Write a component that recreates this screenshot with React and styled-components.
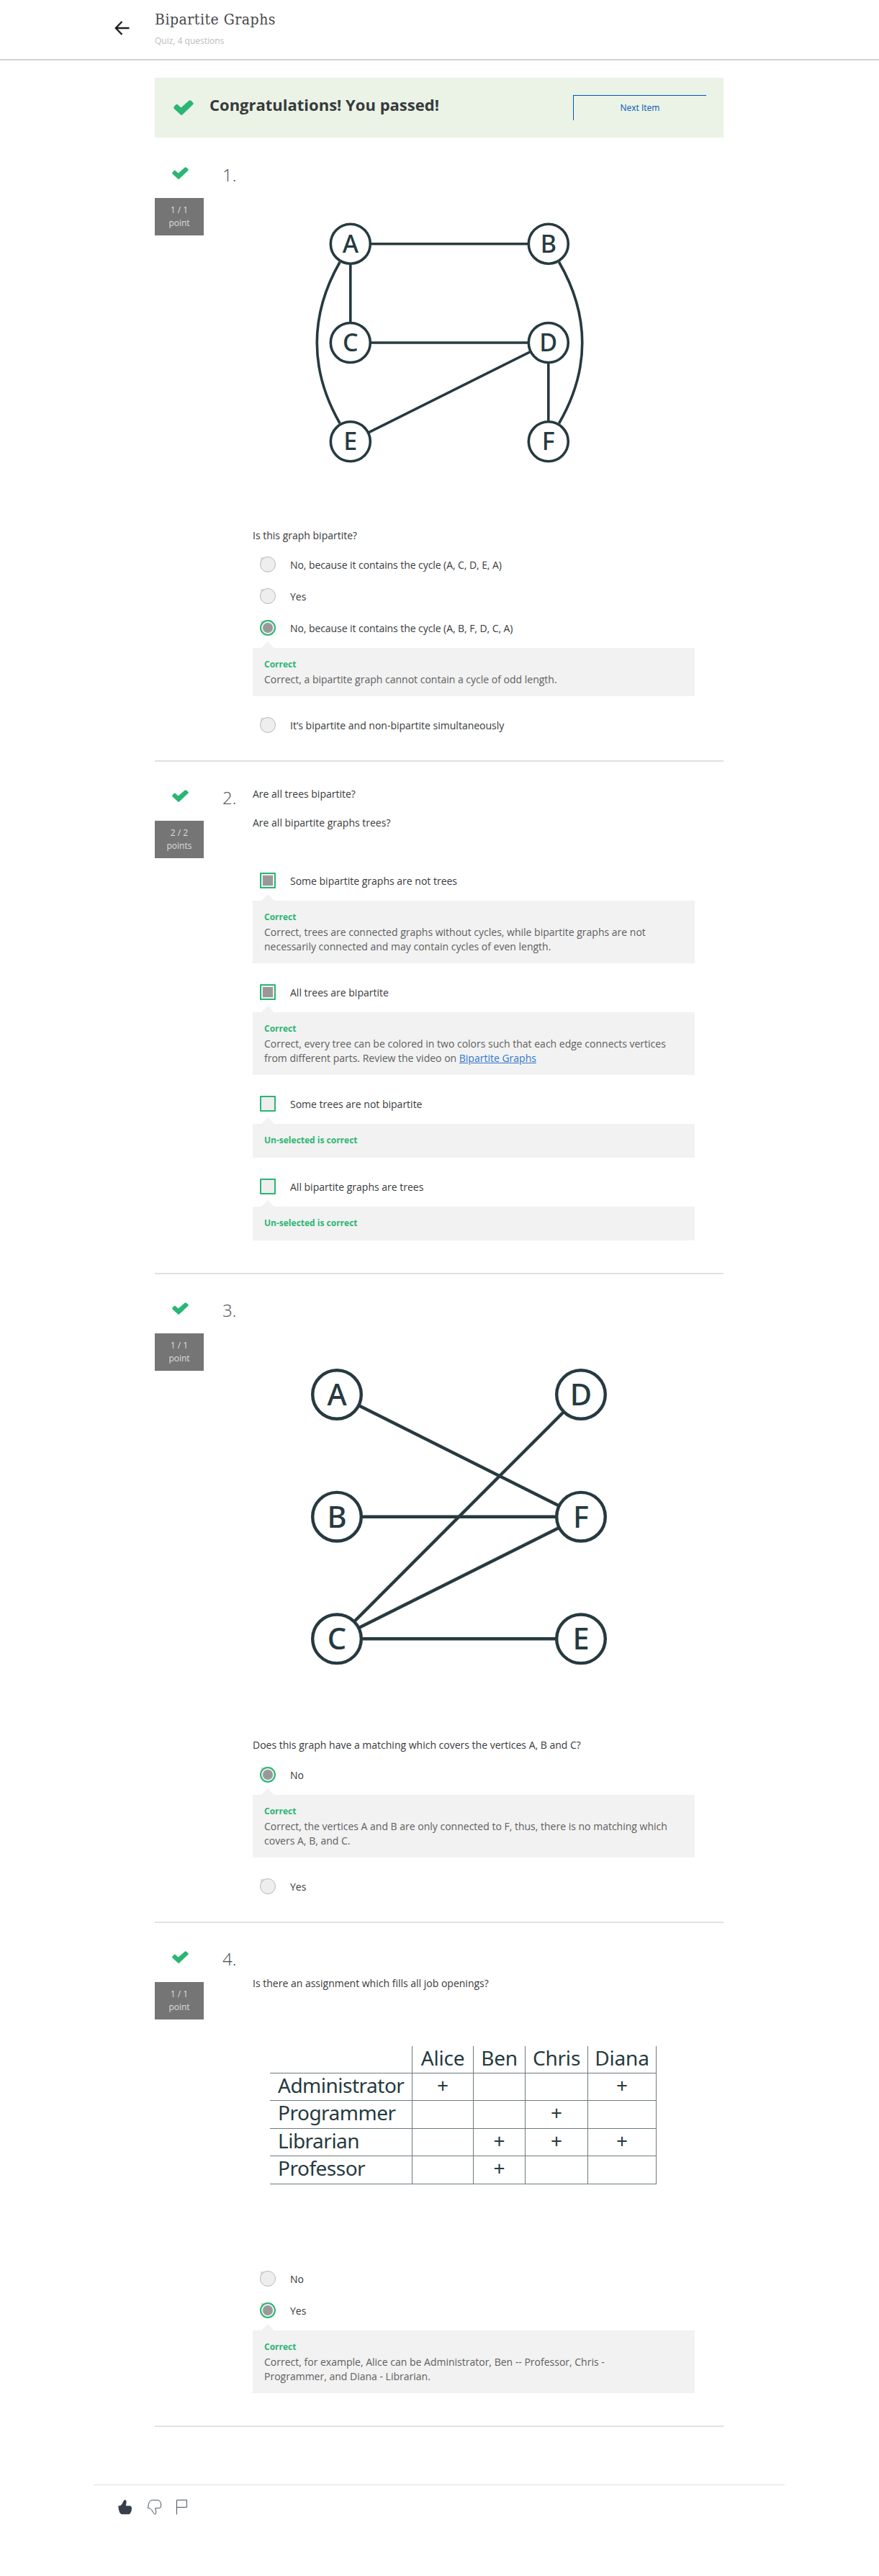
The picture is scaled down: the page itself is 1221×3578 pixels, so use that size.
import React from "react";
import styled, { createGlobalStyle } from "styled-components";

const GREEN = "#2ab673";
const INK = "#263a40";

const GlobalStyle = createGlobalStyle`
  body {
    margin: 0;
    background: #fff;
    color: #373a3c;
    font-family: "Open Sans", "Noto Sans", sans-serif;
    font-size: 14px;
    line-height: 20px;
  }
`;

const Page = styled.div`
  width: 1221px;
  min-height: 3578px;
  background: #fff;
`;

const Header = styled.header`
  display: flex;
  box-sizing: border-box;
  height: 84px;
  padding-left: 159px;
  border-bottom: 2px solid #d3d3d3;
`;

const BackIcon = styled.svg`
  width: 21px;
  height: 20px;
  margin: 29px 35px 0 0;
`;

const HeaderText = styled.div`
  padding-top: 13px;
`;

const Title = styled.h1`
  margin: 0;
  font-family: "DejaVu Serif Condensed", "DejaVu Serif", serif;
  font-stretch: condensed;
  font-weight: 400;
  font-size: 21px;
  line-height: 28px;
  letter-spacing: 0.5px;
  color: #484848;
  white-space: nowrap;
`;

const Subtitle = styled.div`
  margin-top: 7px;
  font-size: 12px;
  line-height: 18px;
  color: #bdbdbd;
`;

const Main = styled.main`
  width: 790px;
  margin-left: 215px;
`;

const Banner = styled.section`
  display: flex;
  box-sizing: border-box;
  height: 83px;
  margin: 24px 0 2px;
  padding-left: 26px;
  background: #eaf3e6;
`;

const BannerTitle = styled.h2`
  flex: 1;
  margin: 22px 0 0 22px;
  font-size: 22px;
  line-height: 30px;
  font-weight: 700;
  color: #373a3c;
`;

const NextButton = styled.button`
  box-sizing: border-box;
  width: 185px;
  height: 35px;
  margin: 24px 24px 0 0;
  padding: 0;
  border: 0 solid #0156b8;
  border-top-width: 1px;
  border-left-width: 1px;
  background: transparent;
  color: #0156b8;
  font: 12px/34px "Open Sans", sans-serif;
`;

const CheckSvg = styled.svg`
  display: block;
  width: ${(p) => p.$w}px;
  height: ${(p) => p.$h}px;
  margin-top: ${(p) => p.$top}px;
  margin-left: ${(p) => p.$left || 0}px;
  flex: none;
`;

const Question = styled.section`
  display: grid;
  grid-template-columns: 68px 68px 614px;
  padding-bottom: 27px;
  border-bottom: 2px solid #e1e1e1;
`;

const Side = styled.div`
  display: flex;
  flex-direction: column;
  align-items: center;
`;

const Points = styled.div`
  box-sizing: border-box;
  width: 68px;
  height: 52px;
  margin-top: 26px;
  padding-top: 8px;
  background: #757575;
  color: #dedede;
  font-size: 12px;
  line-height: 18px;
  text-align: center;
`;

const Number = styled.div`
  padding: 32.5px 0 0 26px;
  font-size: 24px;
  line-height: 34px;
  font-weight: 300;
  color: #4a4a4a;
`;

const Content = styled.div`
  padding-top: 35px;
`;

const Prompt = styled.p`
  margin: ${(p) => p.$top || 0}px 0 ${(p) => p.$bottom || 0}px;
  color: #373a3c;
`;

const Drawing = styled.svg`
  display: block;
  width: 614px;
  height: ${(p) => p.$h}px;
  font-family: "Noto Sans", "Open Sans", sans-serif;
`;

const Option = styled.label`
  display: flex;
  align-items: center;
  height: 44px;
  padding-left: 10px;
`;

const Control = styled.span`
  box-sizing: border-box;
  display: flex;
  align-items: center;
  justify-content: center;
  width: 22px;
  height: 22px;
  background: #eee;
  border: ${(p) => (p.$green ? `2px solid ${GREEN}` : "1px solid #b9b9b9")};
  border-radius: ${(p) => (p.$round ? "50%" : "1px")};
`;

const ControlSlot = styled.span`
  width: 22px;
  height: 22px;
  margin-right: 20px;
  background: ${(p) =>
    p.$round ? "linear-gradient(#dedede, #dedede) 1px 1px / 8px 8px no-repeat" : "none"};
`;

const Mark = styled.span`
  width: 14px;
  height: 14px;
  background: #999;
  border-radius: ${(p) => (p.$round ? "50%" : "0")};
`;

const OptionText = styled.span`
  padding-top: 2px;
  letter-spacing: ${(p) => (p.$tight ? "-0.07px" : "normal")};
`;

const Feedback = styled.div`
  position: relative;
  margin: 6px 0 18px;
  padding: 14px 16px 13px;
  background: #f2f2f2;
  color: #5e5e5e;

  &::before {
    content: "";
    position: absolute;
    left: 12px;
    top: -9px;
    border: solid transparent;
    border-width: 0 9.5px 9px;
    border-bottom-color: #f2f2f2;
  }
`;

const FeedbackTitle = styled.div`
  height: 20px;
  font-size: 12px;
  line-height: 18px;
  font-weight: 700;
  color: ${GREEN};
`;

const Link = styled.a`
  color: #2f76cf;
  text-decoration: underline;
`;

const Table = styled.div`
  display: grid;
  grid-template-columns: 198px 85px 72px 87px 95px;
  grid-template-rows: 38px 38px 39px 38px 39px;
  width: 537px;
  margin: 77px 0 109px 24px;
  font-family: "Noto Sans", "Open Sans", sans-serif;
  font-size: 28px;
  line-height: 32px;
  color: ${INK};
`;

const Cell = styled.div`
  box-sizing: border-box;
  border-right: 1px solid #6c7a7e;
  border-bottom: 1px solid #6c7a7e;
  text-align: ${(p) => (p.$left ? "left" : "center")};
  padding-left: ${(p) => (p.$left ? 11 : 0)}px;
  letter-spacing: ${(p) => (p.$left ? "-0.5px" : "-0.2px")};
  white-space: nowrap;
`;

const Footer = styled.footer`
  display: flex;
  align-items: flex-start;
  box-sizing: border-box;
  width: 960px;
  margin: 80px 0 0 130px;
  padding: 20px 0 0 34px;
  border-top: 1px solid #e1e1e1;
`;

const FootIcon = styled.svg`
  width: 20px;
  height: 21px;
  margin-right: ${(p) => p.$gap || 0}px;
`;

function Check({ w, h, top, left }) {
  return (
    <CheckSvg $w={w} $h={h} $top={top} $left={left} viewBox="0 0 28 21" preserveAspectRatio="none">
      <path
        fill={GREEN}
        d="M.9 9.1 3.4 6.3Q4.6 5.3 5.8 6.3L10.5 10.6 21.2 1Q22.8-.4 24.3.8L27.1 3.4Q28.3 4.9 27 6.2L12.5 20.2Q11.1 21.5 9.7 20.2L.9 12Q-.4 10.5.9 9.1Z"
      />
    </CheckSvg>
  );
}

function Graph({ height, viewBox, nodes, edges, curves = [], r, stroke, size }) {
  return (
    <Drawing $h={height} viewBox={viewBox}>
      <g stroke={INK} strokeWidth={stroke} fill="none">
        {edges.map(([a, b]) => (
          <line key={a + b} x1={nodes[a][0]} y1={nodes[a][1]} x2={nodes[b][0]} y2={nodes[b][1]} />
        ))}
        {curves.map((d) => (
          <path key={d} d={d} />
        ))}
      </g>
      {Object.entries(nodes).map(([name, [x, y]]) => (
        <g key={name}>
          <circle cx={x} cy={y} r={r} fill="#fff" stroke={INK} strokeWidth={stroke} />
          <text x={x} y={y + size * 0.357} fontSize={size} fontWeight="500" textAnchor="middle" fill={INK}>
            {name}
          </text>
        </g>
      ))}
    </Drawing>
  );
}

function Choice({ round, selected, green, tight, label, note, children }) {
  return (
    <>
      <Option>
        <ControlSlot $round={round}>
          <Control $round={round} $green={green || selected}>
            {selected && <Mark $round={round} />}
          </Control>
        </ControlSlot>
        <OptionText $tight={tight}>{label}</OptionText>
      </Option>
      {note && (
        <Feedback>
          <FeedbackTitle>{note}</FeedbackTitle>
          {children}
        </Feedback>
      )}
    </>
  );
}

function QuestionBlock({ number, score, unit, children }) {
  return (
    <Question>
      <Side>
        <Check w={23} h={17} top={39} left={2} />
        <Points>
          {score}
          <br />
          {unit}
        </Points>
      </Side>
      <Number>{number}.</Number>
      <Content>{children}</Content>
    </Question>
  );
}

const people = ["Alice", "Ben", "Chris", "Diana"];
const jobs = [
  ["Administrator", "+", "", "", "+"],
  ["Programmer", "", "", "+", ""],
  ["Librarian", "", "+", "+", "+"],
  ["Professor", "", "+", "", ""],
];

export default function App() {
  return (
    <Page>
      <GlobalStyle />
      <Header>
        <BackIcon viewBox="0 0 21 20" fill="none" stroke="#1f1f1f" strokeWidth="2.4">
          <path d="M10.5 1 1.8 10l8.7 9M2 10h18.5" />
        </BackIcon>
        <HeaderText>
          <Title>Bipartite Graphs</Title>
          <Subtitle>Quiz, 4 questions</Subtitle>
        </HeaderText>
      </Header>

      <Main>
        <Banner>
          <Check w={28} h={21} top={31} />
          <BannerTitle>Congratulations! You passed!</BannerTitle>
          <NextButton>Next Item</NextButton>
        </Banner>

        <QuestionBlock number={1} score="1 / 1" unit="point">
          <Graph
            height={506}
            viewBox="351 228 614 506"
            r={27.5}
            stroke={3.6}
            size={34}
            nodes={{
              A: [486.8, 338.7],
              B: [761.8, 338.7],
              C: [486.8, 476],
              D: [761.8, 476],
              E: [486.8, 613.3],
              F: [761.8, 613.3],
            }}
            edges={["AB", "AC", "CD", "DE", "DF"]}
            curves={[
              "M472.1 364C429.7 438 429.7 514 472.1 588",
              "M776.5 364C819.5 438 819.5 514 776.5 588",
            ]}
          />
          <Prompt $bottom={8}>Is this graph bipartite?</Prompt>
          <Choice round tight label="No, because it contains the cycle (A, C, D, E, A)" />
          <Choice round label="Yes" />
          <Choice round selected tight label="No, because it contains the cycle (A, B, F, D, C, A)" note="Correct">
            Correct, a bipartite graph cannot contain a cycle of odd length.
          </Choice>
          <Choice round label="It’s bipartite and non-bipartite simultaneously" />
        </QuestionBlock>

        <QuestionBlock number={2} score="2 / 2" unit="points">
          <Prompt $bottom={20}>Are all trees bipartite?</Prompt>
          <Prompt $bottom={48}>Are all bipartite graphs trees?</Prompt>
          <Choice selected label="Some bipartite graphs are not trees" note="Correct">
            Correct, trees are connected graphs without cycles, while bipartite graphs are not
            <br />
            necessarily connected and may contain cycles of even length.
          </Choice>
          <Choice selected label="All trees are bipartite" note="Correct">
            Correct, every tree can be colored in two colors such that each edge connects vertices
            <br />
            from different parts. Review the video on <Link>Bipartite Graphs</Link>
          </Choice>
          <Choice green label="Some trees are not bipartite" note="Un-selected is correct" />
          <Choice green label="All bipartite graphs are trees" note="Un-selected is correct" />
        </QuestionBlock>

        <QuestionBlock number={3} score="1 / 1" unit="point">
          <Graph
            height={609}
            viewBox="351 1805 614 609"
            r={33.8}
            stroke={4.4}
            size={41.5}
            nodes={{
              A: [468, 1937],
              B: [468, 2106.7],
              C: [468, 2276.3],
              D: [807, 1937],
              F: [807, 2106.7],
              E: [807, 2276.3],
            }}
            edges={["AF", "BF", "CD", "CF", "CE"]}
          />
          <Prompt $bottom={9}>Does this graph have a matching which covers the vertices A, B and C?</Prompt>
          <Choice round selected label="No" note="Correct">
            Correct, the vertices A and B are only connected to F, thus, there is no matching which
            <br />
            covers A, B, and C.
          </Choice>
          <Choice round label="Yes" />
        </QuestionBlock>

        <QuestionBlock number={4} score="1 / 1" unit="point">
          <Prompt $top={39}>Is there an assignment which fills all job openings?</Prompt>
          <Table>
            <Cell />
            {people.map((name) => (
              <Cell key={name}>{name}</Cell>
            ))}
            {jobs.map(([job, ...marks]) => (
              <React.Fragment key={job}>
                <Cell $left>{job}</Cell>
                {marks.map((mark, i) => (
                  <Cell key={i}>{mark}</Cell>
                ))}
              </React.Fragment>
            ))}
          </Table>
          <Choice round label="No" />
          <Choice round selected label="Yes" note="Correct">
            Correct, for example, Alice can be Administrator, Ben -- Professor, Chris -
            <br />
            Programmer, and Diana - Librarian.
          </Choice>
        </QuestionBlock>
      </Main>

      <Footer>
        <FootIcon $gap={21} viewBox="0 0 20 21" fill="#373f49">
          <path d="M.3 8.6Q3.5 8.8 5.2 6.4L7.8 1.6Q8.6.2 10 .3 11.6.6 11.6 2.6 11.6 4.6 10.8 8.6H16Q19 8.8 19 12.5 19 17 16.6 19.4 15.6 20.3 14 20.3H6Q3.4 20.3 2 17.6.6 14 .3 8.6Z" />
        </FootIcon>
        <FootIcon $gap={20} viewBox="0 0 20 21" fill="none" stroke="#4c535c" strokeWidth="1">
          <path d="M.6 11.8Q.8 6.5 2.4 3.2 3.8.7 6.4.7H14Q16 .7 17 2 18.8 4.4 18.8 8 18.7 11.8 16 11.8H10.6Q12 15.5 11.8 18 11.6 20.2 10.2 20.3 9.4 20.2 8.7 18.9L5.4 13.9Q3.6 11.6 .6 11.8Z" />
        </FootIcon>
        <FootIcon viewBox="0 0 20 21" fill="none" stroke="#4c535c" strokeWidth="1">
          <path d="M.5 20.5V.5H14.5V10.5H.5" />
        </FootIcon>
      </Footer>
    </Page>
  );
}
